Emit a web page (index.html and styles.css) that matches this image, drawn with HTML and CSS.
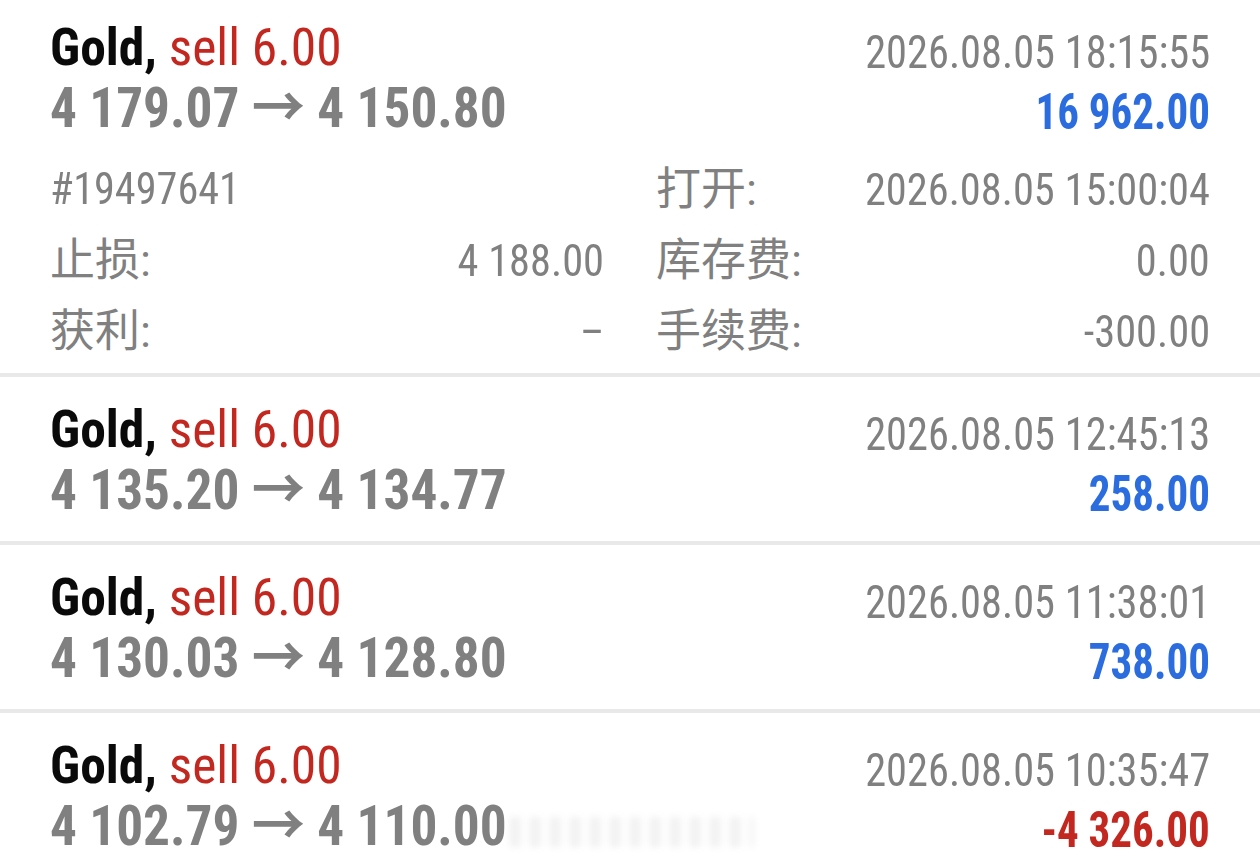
FILE: index.html
```html
<!DOCTYPE html>
<html lang="zh-CN">
<head>
<meta charset="utf-8">
<title>Trades</title>
<link rel="stylesheet" href="styles.css">
</head>
<body>
<div class="list">
  <div class="trade open">
    <div class="head">
      <div class="col-left">
        <div class="title"><span class="sym">Gold,</span> <span class="sell">sell 6.00</span></div>
        <div class="price">4 179.07 → 4 150.80</div>
      </div>
      <div class="col-right">
        <div class="time">2026.08.05 18:15:55</div>
        <div class="profit pos">16 962.00</div>
      </div>
    </div>
    <div class="details">
      <div class="cell"><span class="num">#19497641</span><span class="val"></span></div>
      <div class="cell"><span class="label">打开:</span><span class="val">2026.08.05 15:00:04</span></div>
      <div class="cell"><span class="label">止损:</span><span class="val">4 188.00</span></div>
      <div class="cell"><span class="label">库存费:</span><span class="val">0.00</span></div>
      <div class="cell"><span class="label">获利:</span><span class="val">–</span></div>
      <div class="cell"><span class="label">手续费:</span><span class="val">-300.00</span></div>
    </div>
  </div>
  <div class="sep"></div>
  <div class="trade">
    <div class="head">
      <div class="col-left">
        <div class="title"><span class="sym">Gold,</span> <span class="sell">sell 6.00</span></div>
        <div class="price">4 135.20 → 4 134.77</div>
      </div>
      <div class="col-right">
        <div class="time">2026.08.05 12:45:13</div>
        <div class="profit pos">258.00</div>
      </div>
    </div>
  </div>
  <div class="sep"></div>
  <div class="trade">
    <div class="head">
      <div class="col-left">
        <div class="title"><span class="sym">Gold,</span> <span class="sell">sell 6.00</span></div>
        <div class="price">4 130.03 → 4 128.80</div>
      </div>
      <div class="col-right">
        <div class="time">2026.08.05 11:38:01</div>
        <div class="profit pos">738.00</div>
      </div>
    </div>
  </div>
  <div class="sep"></div>
  <div class="trade">
    <div class="head">
      <div class="col-left">
        <div class="title"><span class="sym">Gold,</span> <span class="sell">sell 6.00</span></div>
        <div class="price">4 102.79 → 4 110.00</div>
      </div>
      <div class="col-right">
        <div class="time">2026.08.05 10:35:47</div>
        <div class="profit neg">-4 326.00</div>
      </div>
    </div>
    <div class="watermark"></div>
  </div>
</div>
</body>
</html>
```
FILE: styles.css
```css
html, body {
  margin: 0;
  padding: 0;
  background: #ffffff;
}
body {
  width: 1260px;
  height: 859px;
  overflow: hidden;
  font-family: "Roboto", "Noto Sans CJK SC", sans-serif;
  font-stretch: 75%;
  color: #808080;
}
.list {
  margin-top: -5px;
}
.trade {
  position: relative;
  padding: 23px 50px 17px 50px;
}
.trade.open {
  padding-bottom: 6px;
}
.head {
  display: flex;
  justify-content: space-between;
}
.col-left, .col-right {
  display: flex;
  flex-direction: column;
}
.col-left {
  align-items: flex-start;
}
.col-right {
  align-items: flex-end;
}
.title {
  font-size: 51.5px;
  line-height: 60px;
  white-space: nowrap;
}
.sym {
  color: #0a0a0a;
  font-weight: 700;
}
.sell {
  color: #c2281f;
}
.price {
  font-size: 56px;
  font-weight: 700;
  line-height: 60px;
  color: #808080;
  white-space: nowrap;
  transform: scaleX(0.952);
  transform-origin: left center;
}
.time {
  font-size: 46px;
  line-height: 60px;
  padding-top: 4px;
  color: #808080;
  white-space: nowrap;
  transform: scaleX(0.922);
  transform-origin: right center;
}
.profit {
  font-size: 50px;
  font-weight: 700;
  line-height: 60px;
  white-space: nowrap;
  transform: scaleX(0.86);
  transform-origin: right center;
}
.pos { color: #2b6ddf; }
.neg { color: #c2281f; }
.details {
  display: grid;
  grid-template-columns: 1fr 1fr;
  column-gap: 52px;
  margin-top: 12px;
}
.cell {
  display: flex;
  justify-content: space-between;
  align-items: baseline;
  height: 71px;
  line-height: 71px;
  color: #808080;
  white-space: nowrap;
}
.label {
  font-size: 45px;
}
.num, .val {
  display: inline-block;
  font-size: 44px;
}
.num {
  transform: scaleX(0.96);
  transform-origin: left center;
}
.val {
  transform: scaleX(0.964);
  transform-origin: right center;
}
.sep {
  height: 4px;
  background: #e9e9e9;
}
.watermark {
  position: absolute;
  left: 508px;
  top: 104px;
  width: 246px;
  height: 30px;
  background: repeating-linear-gradient(90deg, rgba(225,225,225,0) 0px, rgba(218,218,218,0.8) 6px, rgba(235,235,235,0.3) 14px, rgba(225,225,225,0) 20px);
  filter: blur(3px);
  opacity: 0.6;
}
```
